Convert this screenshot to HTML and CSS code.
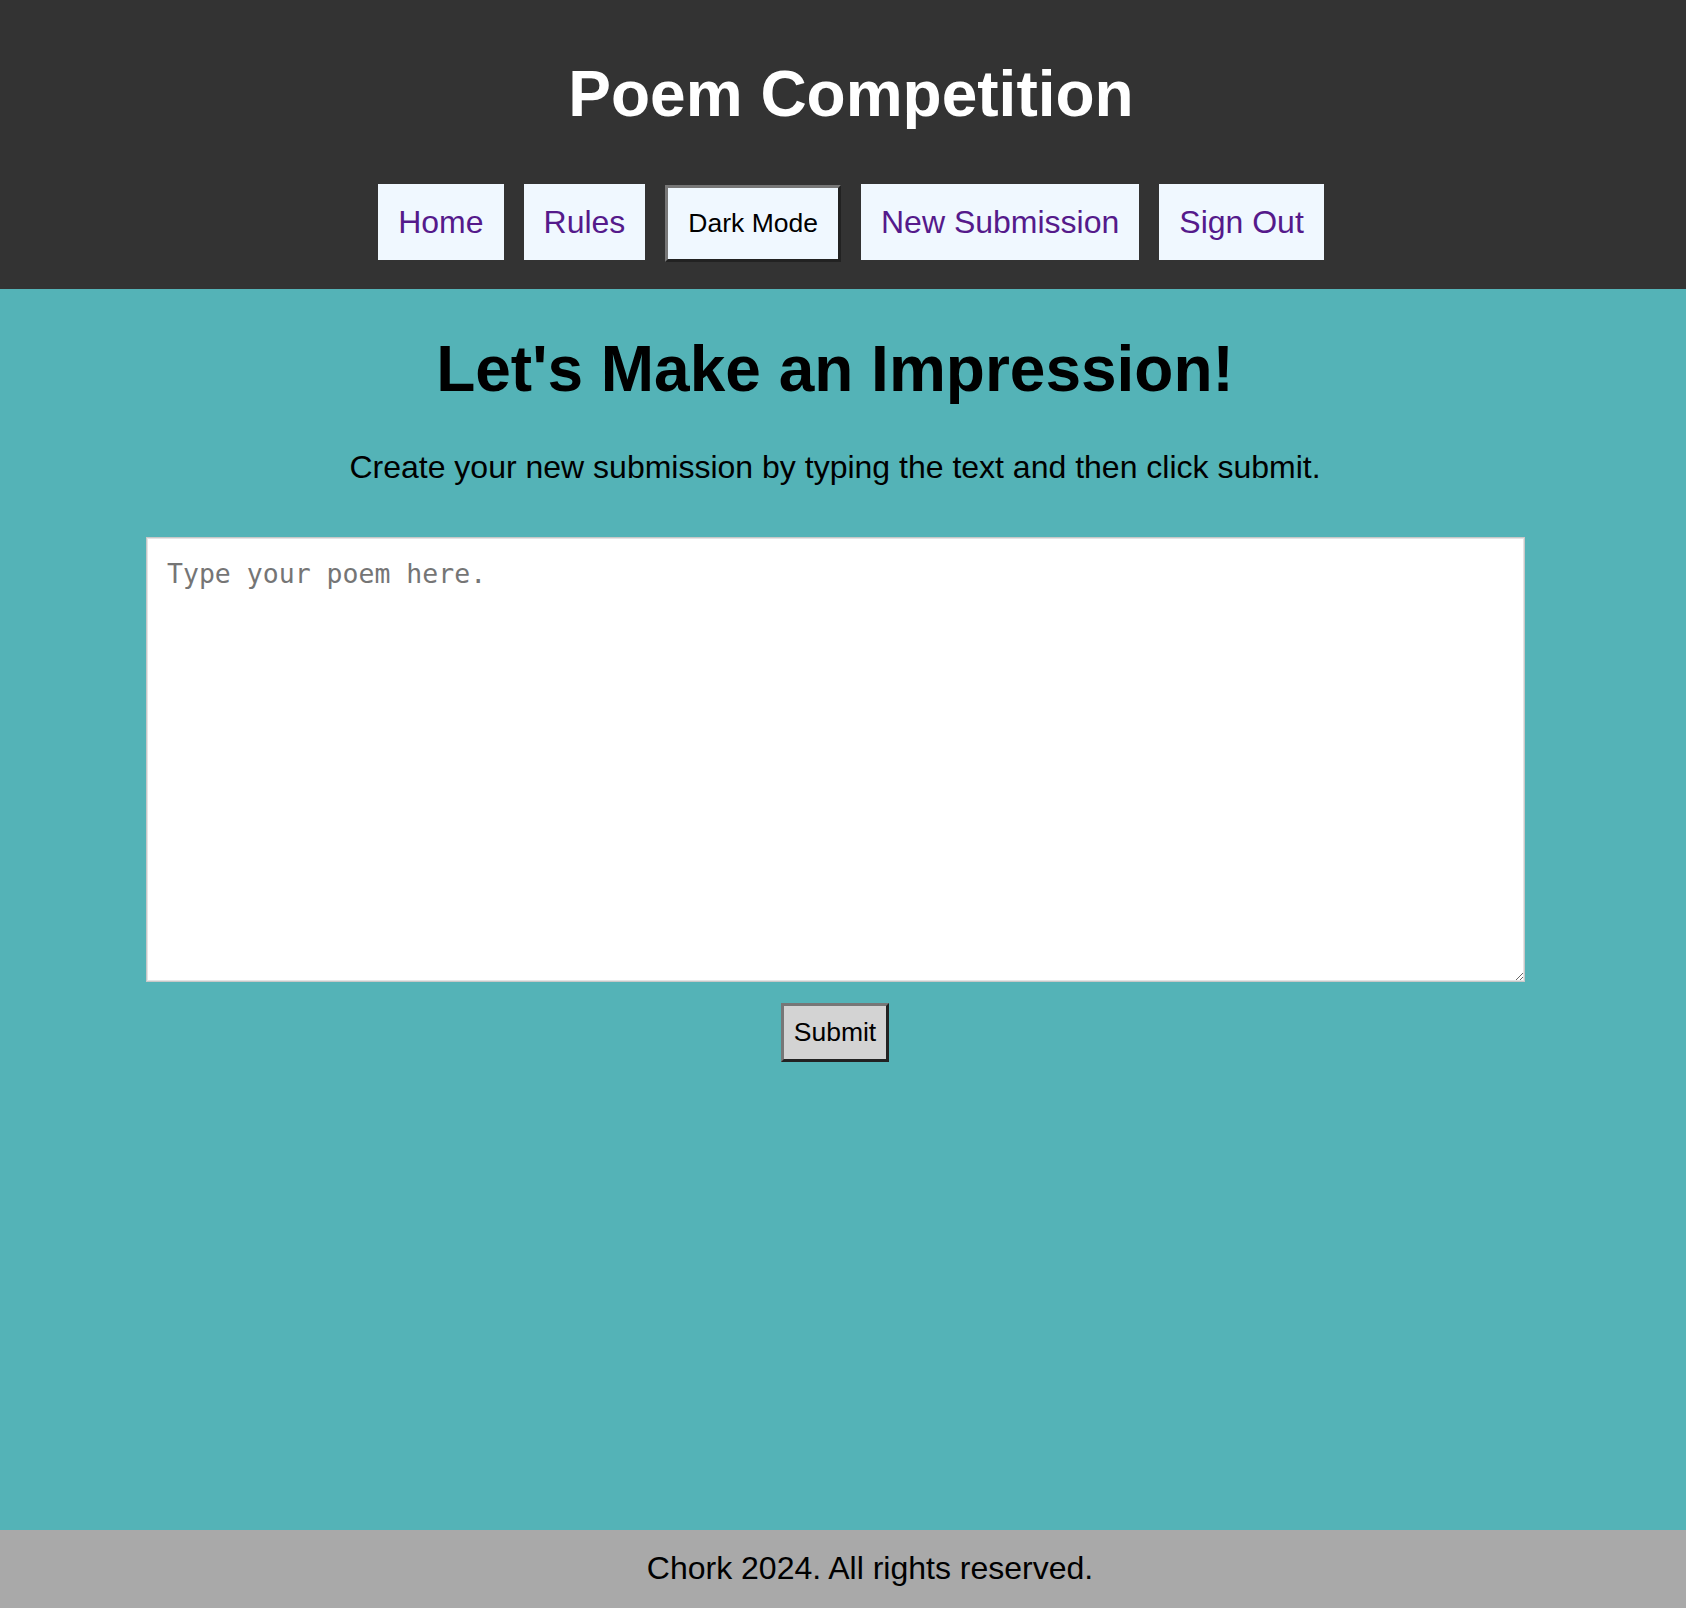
FILE: index.html
```html
<!DOCTYPE html>
<html lang="en">
<head>
<meta charset="utf-8">
<title>Poem Competition</title>
<link rel="stylesheet" href="styles.css">
</head>
<body>
<header class="site-header">
  <h1 class="site-title">Poem Competition</h1>
  <nav class="nav">
    <a class="nav-link" href="#">Home</a>
    <a class="nav-link" href="#">Rules</a>
    <button class="nav-button" type="button">Dark Mode</button>
    <a class="nav-link" href="#">New Submission</a>
    <a class="nav-link" href="#">Sign Out</a>
  </nav>
</header>
<main class="main">
  <h1 class="page-title">Let's Make an Impression!</h1>
  <p class="intro">Create your new submission by typing the text and then click submit.</p>
  <form class="form">
    <textarea class="poem" placeholder="Type your poem here."></textarea>
    <button class="submit" type="button">Submit</button>
  </form>
</main>
<footer class="site-footer">
  <p class="footer-text">Chork 2024. All rights reserved.</p>
</footer>
</body>
</html>
```
FILE: styles.css
```css
html, body {
  margin: 0;
  padding: 0;
}
body {
  font-family: "Liberation Sans", Arial, Helvetica, sans-serif;
  background: #54b3b7;
  color: #000;
  display: flex;
  flex-direction: column;
  min-height: 1608px;
}
.site-header {
  background: #333333;
  padding: 57px 0 27px 16px;
  text-align: center;
}
.site-title {
  margin: 0;
  font-size: 64px;
  font-weight: bold;
  color: #ffffff;
  line-height: 74px;
}
.nav {
  margin-top: 50px;
  display: flex;
  justify-content: center;
  align-items: center;
  gap: 20px;
}
.nav-link {
  display: block;
  background: #f0f8ff;
  color: #551a8b;
  text-decoration: none;
  font-size: 32px;
  line-height: 37px;
  padding: 20px 20px 19px;
}
.nav-button {
  font-family: "Liberation Sans", Arial, Helvetica, sans-serif;
  background: #f0f8ff;
  color: #000;
  font-size: 26.5px;
  line-height: 31px;
  padding: 20px 20px 20px;
  margin-top: 4px;
  border: 3px solid;
  border-color: #777777 #222222 #222222 #777777;
}
.main {
  flex: 1;
  padding: 43px 16px 0 0;
  text-align: center;
}
.page-title {
  margin: 0;
  font-size: 64px;
  font-weight: bold;
  line-height: 74px;
}
.intro {
  margin: 43px 0 0;
  font-size: 32px;
  line-height: 37px;
}
.form {
  margin-top: 51px;
  display: flex;
  flex-direction: column;
  align-items: center;
}
.poem {
  box-sizing: border-box;
  width: 1379px;
  height: 445px;
  margin-left: 1px;
  padding: 20px;
  border: 1px solid #c8c8c8;
  box-shadow: inset 0 0 0 1px #e4e4e4;
  background: #ffffff;
  font-family: "DejaVu Sans Mono", "Liberation Mono", monospace;
  font-size: 26.5px;
  line-height: 31px;
  resize: both;
}
.poem::placeholder {
  color: #757575;
}
.submit {
  margin-top: 21px;
  font-family: "Liberation Sans", Arial, Helvetica, sans-serif;
  font-size: 26.5px;
  line-height: 31px;
  padding: 11px 10px;
  background: #d3d3d3;
  color: #000;
  border: 3px solid;
  border-color: #777777 #222222 #222222 #777777;
}
.site-footer {
  background: #a9a9a9;
  height: 78px;
  box-sizing: border-box;
  padding: 20px 0 0 54px;
  text-align: center;
}
.footer-text {
  margin: 0;
  font-size: 32px;
  line-height: 37px;
}
```
